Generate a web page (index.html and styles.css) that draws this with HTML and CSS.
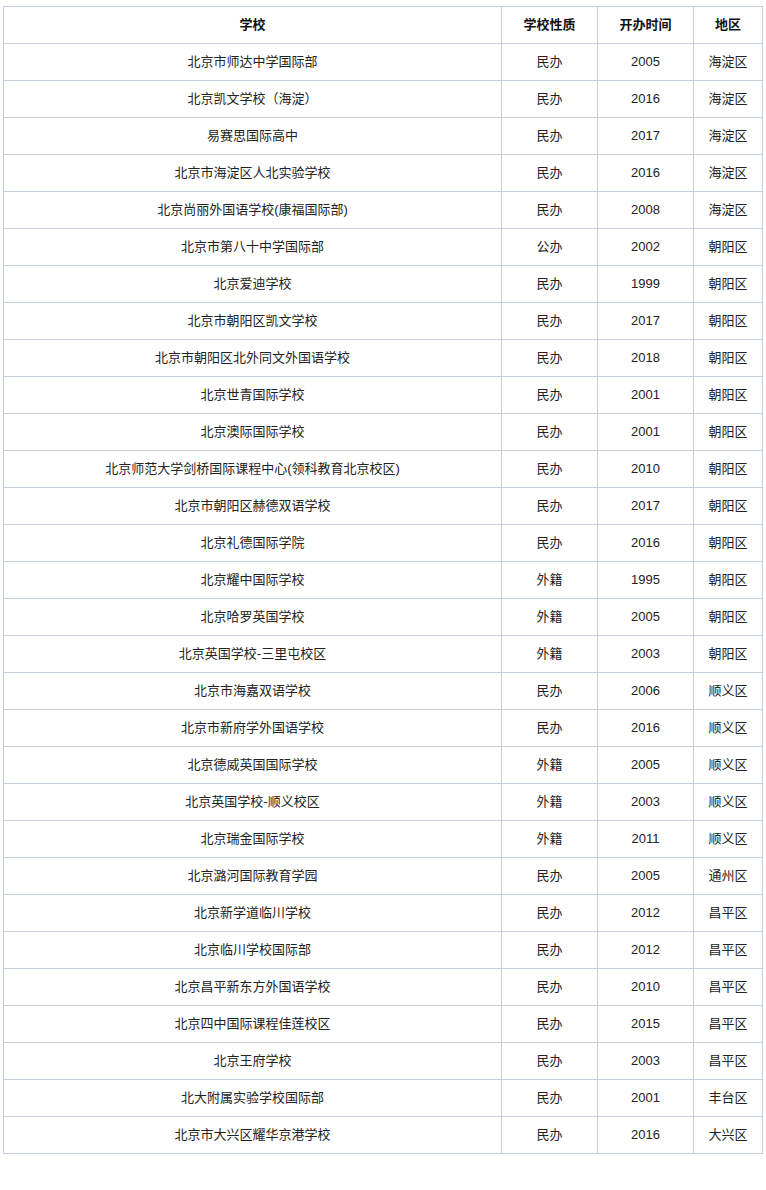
FILE: index.html
```html
<!DOCTYPE html>
<html lang="zh-CN">
<head>
<meta charset="utf-8">
<title>学校</title>
<link rel="stylesheet" href="styles.css">
</head>
<body>
<table class="schools">
<colgroup>
<col class="c-name"><col class="c-type"><col class="c-year"><col class="c-area">
</colgroup>
<thead>
<tr><th>学校</th><th>学校性质</th><th>开办时间</th><th>地区</th></tr>
</thead>
<tbody>
<tr><td>北京市师达中学国际部</td><td>民办</td><td>2005</td><td>海淀区</td></tr>
<tr><td>北京凯文学校（海淀）</td><td>民办</td><td>2016</td><td>海淀区</td></tr>
<tr><td>易赛思国际高中</td><td>民办</td><td>2017</td><td>海淀区</td></tr>
<tr><td>北京市海淀区人北实验学校</td><td>民办</td><td>2016</td><td>海淀区</td></tr>
<tr><td>北京尚丽外国语学校(康福国际部)</td><td>民办</td><td>2008</td><td>海淀区</td></tr>
<tr><td>北京市第八十中学国际部</td><td>公办</td><td>2002</td><td>朝阳区</td></tr>
<tr><td>北京爱迪学校</td><td>民办</td><td>1999</td><td>朝阳区</td></tr>
<tr><td>北京市朝阳区凯文学校</td><td>民办</td><td>2017</td><td>朝阳区</td></tr>
<tr><td>北京市朝阳区北外同文外国语学校</td><td>民办</td><td>2018</td><td>朝阳区</td></tr>
<tr><td>北京世青国际学校</td><td>民办</td><td>2001</td><td>朝阳区</td></tr>
<tr><td>北京澳际国际学校</td><td>民办</td><td>2001</td><td>朝阳区</td></tr>
<tr><td>北京师范大学剑桥国际课程中心(领科教育北京校区)</td><td>民办</td><td>2010</td><td>朝阳区</td></tr>
<tr><td>北京市朝阳区赫德双语学校</td><td>民办</td><td>2017</td><td>朝阳区</td></tr>
<tr><td>北京礼德国际学院</td><td>民办</td><td>2016</td><td>朝阳区</td></tr>
<tr><td>北京耀中国际学校</td><td>外籍</td><td>1995</td><td>朝阳区</td></tr>
<tr><td>北京哈罗英国学校</td><td>外籍</td><td>2005</td><td>朝阳区</td></tr>
<tr><td>北京英国学校-三里屯校区</td><td>外籍</td><td>2003</td><td>朝阳区</td></tr>
<tr><td>北京市海嘉双语学校</td><td>民办</td><td>2006</td><td>顺义区</td></tr>
<tr><td>北京市新府学外国语学校</td><td>民办</td><td>2016</td><td>顺义区</td></tr>
<tr><td>北京德威英国国际学校</td><td>外籍</td><td>2005</td><td>顺义区</td></tr>
<tr><td>北京英国学校-顺义校区</td><td>外籍</td><td>2003</td><td>顺义区</td></tr>
<tr><td>北京瑞金国际学校</td><td>外籍</td><td>2011</td><td>顺义区</td></tr>
<tr><td>北京潞河国际教育学园</td><td>民办</td><td>2005</td><td>通州区</td></tr>
<tr><td>北京新学道临川学校</td><td>民办</td><td>2012</td><td>昌平区</td></tr>
<tr><td>北京临川学校国际部</td><td>民办</td><td>2012</td><td>昌平区</td></tr>
<tr><td>北京昌平新东方外国语学校</td><td>民办</td><td>2010</td><td>昌平区</td></tr>
<tr><td>北京四中国际课程佳莲校区</td><td>民办</td><td>2015</td><td>昌平区</td></tr>
<tr><td>北京王府学校</td><td>民办</td><td>2003</td><td>昌平区</td></tr>
<tr><td>北大附属实验学校国际部</td><td>民办</td><td>2001</td><td>丰台区</td></tr>
<tr><td>北京市大兴区耀华京港学校</td><td>民办</td><td>2016</td><td>大兴区</td></tr>
</tbody>
</table>
</body>
</html>
```

FILE: styles.css
```css
html, body {
  margin: 0;
  padding: 0;
  background: #fff;
}
body {
  font-family: "Liberation Sans", "Noto Sans CJK SC", sans-serif;
  font-size: 13px;
  color: #222;
}
.schools {
  margin: 6px 0 0 3px;
  width: 759px;
  border-collapse: collapse;
  table-layout: fixed;
}
.c-name { width: 498px; }
.c-type { width: 96px; }
.c-year { width: 96px; }
.c-area { width: 69px; }
.schools th,
.schools td {
  border: 1px solid #c4cedd;
  height: 35px;
  padding: 0 0 1px;
  text-align: center;
  vertical-align: middle;
  line-height: 18px;
  font-weight: normal;
}
.schools th {
  font-weight: bold;
  color: #111;
}
```
